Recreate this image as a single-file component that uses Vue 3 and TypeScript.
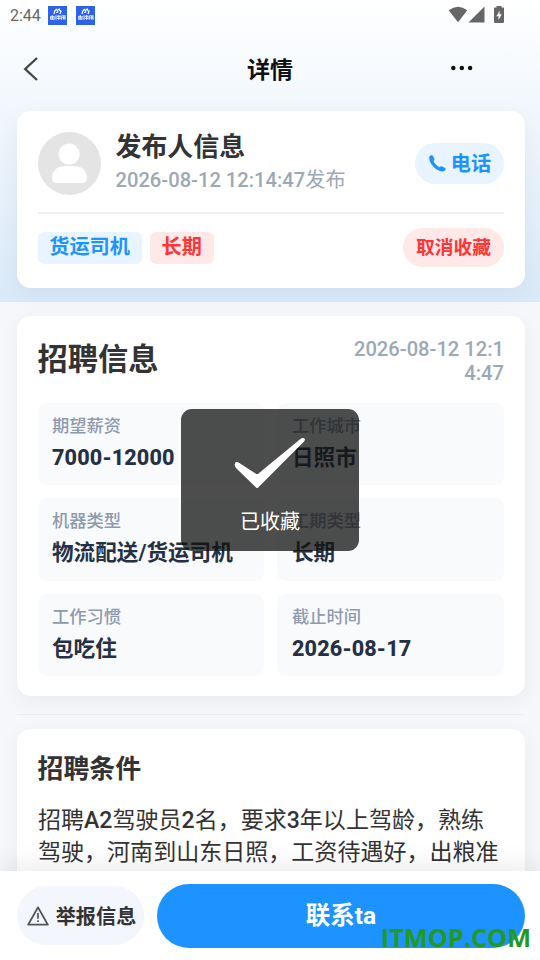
<script setup lang="ts">
interface Field {
  label: string
  value: string
}

interface Run {
  text: string
  latin: boolean
}

const publishedAt = '2026-08-12 12:14:47'

const fields: Field[] = [
  { label: '期望薪资', value: '7000-12000' },
  { label: '工作城市', value: '日照市' },
  { label: '机器类型', value: '物流配送/货运司机' },
  { label: '工期类型', value: '长期' },
  { label: '工作习惯', value: '包吃住' },
  { label: '截止时间', value: '2026-08-17' },
]

const isNumeric = (value: string): boolean => /^[\d-]+$/.test(value)

const requirements =
  '招聘A2驾驶员2名，要求3年以上驾龄，熟练驾驶，河南到山东日照，工资待遇好，出粮准时'

// Latin letters and digits are set one weight heavier than the Chinese text.
const runs: Run[] = (requirements.match(/[A-Za-z0-9]+|[^A-Za-z0-9]+/g) ?? []).map((text) => ({
  text,
  latin: /^[A-Za-z0-9]/.test(text),
}))
</script>

<template>
  <div class="page">
    <div class="hero">
      <div class="status">
        <span class="clock">2:44</span>
        <svg v-for="n in 2" :key="n" class="app-badge" viewBox="0 0 19 19">
          <rect width="19" height="19" fill="#2c63ea" />
          <path d="M6 8 6.800 5 8.300 3.300 9.500 4.500 11.300 3 11.800 4.500 13 5 12 8M8.300 6.800 10.300 5.500" fill="none" stroke="#fff" stroke-width="1.200" />
          <path d="M2 10.800H6.700M4.300 9V13M2.500 13.300H6.500M2.700 11V13.500M6 11V13.500M8 9.300V13.700M9 10.300H12.500M9 12.200H12.500M10.700 9V13.700M13.300 9.500V13.700M14 9.800H17V13.700M14.200 11.800H17M15.500 10V13.500" fill="none" stroke="#fff" stroke-opacity=".9" stroke-width="1.100" />
        </svg>
        <div class="status-icons">
          <svg width="20" height="17" viewBox="0 0 20 17"><path d="M10 16.300.700 4.300Q10-3 19.300 4.300Z" fill="#666" /></svg>
          <svg width="17" height="17" viewBox="0 0 17 17"><path d="M.5 16.500H16.500V.5Z" fill="#666" /></svg>
          <svg class="battery" width="10" height="17" viewBox="0 0 10 17">
            <path d="M0 2.200Q0 1.500.8 1.500H2.500V0H7.500V1.500H9.200Q10 1.500 10 2.200V16Q10 17 9 17H1Q0 17 0 16Z" fill="#666" />
            <path d="M5.800 4.500 2.300 10.200H4.500V14L7.700 8.300H5.500Z" fill="#fff" />
          </svg>
        </div>
      </div>

      <header class="nav">
        <svg width="16" height="26" viewBox="0 0 16 26"><path d="M14 2 2.200 13 14 24" fill="none" stroke="#444" stroke-width="2.300" /></svg>
        <h1>详情</h1>
        <svg class="more" width="24" height="6" viewBox="0 0 24 6">
          <circle cx="3.300" cy="3" r="2.250" /><circle cx="11.800" cy="3" r="2.250" /><circle cx="20.100" cy="3" r="2.250" />
        </svg>
      </header>

      <section class="card publisher">
        <div class="person">
          <svg class="avatar" viewBox="0 0 63 63">
            <circle cx="31.500" cy="31.500" r="31.500" fill="#e4e4e4" />
            <circle cx="31.200" cy="22.200" r="10.600" fill="#fff" />
            <path d="M14 46C14 37.500 21 34 27 34H36C42 34 49 37.500 49 46Q49 51 44 51H19Q14 51 14 46Z" fill="#fff" />
          </svg>
          <div class="who">
            <div class="name">发布人信息</div>
            <div class="posted">{{ publishedAt }}<span class="regular">发布</span></div>
          </div>
          <button class="call">
            <svg width="19" height="19" viewBox="0 0 19 19"><path d="M1.400 2.600C2.300 1.200 4.300.8 5 1.900L6.500 5C6.800 5.900 5.400 6.900 5.700 7.600C6.500 9.500 8.900 12.100 11.100 12.900C12 13.200 12.800 11.900 13.700 12.200L17.100 13.900C18.400 14.700 17.200 16.700 15.600 17.300C9.300 18.800-.2 9 1.400 2.600Z" fill="#1c93ff" /></svg>
            <span>电话</span>
          </button>
        </div>
        <div class="tags">
          <span class="tag blue">货运司机</span>
          <span class="tag red">长期</span>
          <button class="unfav">取消收藏</button>
        </div>
      </section>
    </div>

    <main>
      <section class="card job">
        <div class="job-head">
          <h2>招聘信息</h2>
          <span class="job-time">{{ publishedAt }}</span>
        </div>
        <div class="grid">
          <div v-for="f in fields" :key="f.label" class="cell">
            <div class="label">{{ f.label }}</div>
            <div class="value" :class="{ numeric: isNumeric(f.value) }">{{ f.value }}</div>
          </div>
        </div>
      </section>
      <div class="rule"></div>
      <section class="card terms">
        <h3>招聘条件</h3>
        <p><span v-for="(r, i) in runs" :key="i" :class="{ latin: r.latin }">{{ r.text }}</span></p>
      </section>
    </main>

    <footer>
      <button class="report">
        <svg width="22" height="20" viewBox="0 0 22 20">
          <path d="M11 1.400 20.800 18.600H1.200Z" fill="none" stroke="#555" stroke-width="1.900" stroke-linejoin="round" />
          <path d="M11 7V12.800M11 14.300V16" stroke="#555" stroke-width="1.700" />
        </svg>
        <span>举报信息</span>
      </button>
      <button class="contact">联系ta</button>
    </footer>

    <div class="toast">
      <svg width="72" height="54" viewBox="0 0 72 54"><path d="M4.500 25.500Q1 24 .8 27.500Q.6 29.500 2 31L22 50.500Q23 51.500 24.200 50.500L70 4.500Q71.500 2.500 70.500 1.500Q69 .3 67 1.500L24.500 36.500Q23 37.700 21.500 36.500Z" fill="#fff" /></svg>
      <span>已收藏</span>
    </div>
    <div class="watermark">ITMOP.COM</div>
  </div>
</template>

<style>
body {
  margin: 0;
  background: #f5f7fa;
  overflow: hidden;
}
</style>

<style scoped>
.page {
  position: relative;
  display: flex;
  flex-direction: column;
  width: 540px;
  height: 960px;
  overflow: hidden;
  font-family: Roboto, "Noto Sans CJK SC", sans-serif;
  font-weight: 500;
  color: #333;
  background: #f5f7fa;
}
* { box-sizing: border-box; }
h1, h2, h3, p { margin: 0; }
svg { display: block; flex: none; }
button {
  border: 0;
  padding: 0;
  font: inherit;
  display: flex;
  align-items: center;
  justify-content: center;
}
.regular { font-weight: 400; }
.hero {
  flex: none;
  height: 302px;
  padding: 0 15px 0 17px;
  background: linear-gradient(180deg, #fff 0%, #d9e9f9 100%);
}
.status {
  display: flex;
  align-items: center;
  height: 31px;
  margin: 0 21px 0 -7px;
  color: #666;
  font-size: 16px;
  font-weight: 400;
}
.clock { width: 38px; }
.app-badge { width: 19px; height: 19px; margin-right: 9px; }
.status-icons { display: flex; align-items: center; margin: 0 0 2px auto; height: 17px; }
.battery { margin-left: 9px; }
.nav {
  display: flex;
  align-items: center;
  height: 76px;
  margin-bottom: 4px;
  justify-content: space-between;
  padding: 0 51px 0 6px;
}
h1 { font-size: 23.04px; line-height: 34px; font-weight: 700; color: #111; margin: 3px 0 0 51px; }
.more { fill: #111; margin-bottom: 2px; }
.card {
  border-radius: 14px;
  background: #fff;
  box-shadow: 0 6px 22px rgba(0, 0, 0, .05);
}
.publisher { height: 177px; padding: 21px 21px 0; }
.person {
  display: flex;
  height: 82px;
  border-bottom: 2px solid #ebf0f5;
}
.avatar { width: 63px; height: 63px; }
.who { flex: 1; margin-left: 14.5px; }
.name { font-size: 25.92px; line-height: 30px; font-weight: 700; }
.posted { font-size: 20.16px; line-height: 24px; margin-top: 6px; color: #9ca8b5; }
.call {
  width: 89px;
  height: 41px;
  margin-top: 11px;
  border-radius: 21px;
  gap: 4px;
  background: #e8f4ff;
  color: #1c93ff;
  font-size: 20.16px;
  font-weight: 700;
}
.call svg { margin-top: -1px; }
.call span { padding-bottom: 2px; }
.tags { display: flex; align-items: center; height: 68px; gap: 8px; }
.tag {
  height: 32px;
  padding: 0 11.8px;
  border-radius: 6px;
  font-size: 20.16px;
  line-height: 31px;
  font-weight: 700;
}
.blue { padding-left: 11.3px; background: #e8f4ff; color: #1c93ff; }
.red { background: #ffe8e8; color: #ff3434; }
.unfav {
  width: 101px;
  height: 39px;
  padding-bottom: 4px;
  margin: 0 0 2px auto;
  border-radius: 20px;
  background: #ffe8e8;
  color: #ff3434;
  font-size: 18.72px;
  font-weight: 700;
}
main { padding: 14px 15px 0 17px; }
.job { height: 380px; padding: 21px 21px 0; }
.job-head { display: flex; justify-content: space-between; height: 66px; }
h2 { font-size: 30.24px; line-height: 46px; font-weight: 700; margin-left: -.5px; }
.job-time {
  width: 151px;
  text-align: right;
  font-size: 20.16px;
  line-height: 24px;
  color: #9ca8b5;
  word-break: break-all;
}
.grid {
  display: grid;
  grid-template-columns: 226px 227px;
  grid-auto-rows: 82.3px;
  gap: 13.1px 13px;
}
.cell { padding: 11px 14px 0; border-radius: 9px; background: #f8fafc; }
.cell:nth-child(even) { padding-left: 15px; }
.label { font-size: 17.28px; line-height: 24px; color: #8e9bae; }
.value { font-size: 21.6px; line-height: 32px; margin-top: 4px; font-weight: 700; color: #253044; }
.numeric { font-weight: 800; letter-spacing: .15px; }
.rule { height: 1px; margin: 18px 0 14px; background: #ebedf0; }
.terms { height: 260px; padding: 21px 21px 0; }
h3 { font-size: 25.92px; line-height: 38px; font-weight: 700; margin-left: -.5px; }
p { margin-top: 17px; font-size: 23.04px; line-height: 32.3px; font-weight: 400; word-break: break-all; }
.latin { font-weight: 500; }
footer {
  position: absolute;
  left: 0;
  right: 0;
  bottom: 0;
  height: 89px;
  display: flex;
  align-items: center;
  gap: 13px;
  padding: 0 15px 0 17px;
  background: #fff;
  box-shadow: 0 -6px 22px rgba(0, 0, 0, .08);
}
.report {
  width: 127px;
  height: 59px;
  padding-left: 2px;
  border-radius: 30px;
  gap: 7px;
  background: #f3f6fc;
  color: #333;
  font-size: 20.16px;
  font-weight: 700;
}
.report span { padding-bottom: 1px; }
.contact {
  flex: 1;
  height: 64px;
  padding-bottom: 4px;
  border-radius: 32px;
  background: #1c93ff;
  color: #fff;
  font-size: 24.48px;
  font-weight: 700;
}
.toast {
  position: absolute;
  left: 181px;
  top: 409px;
  width: 178px;
  height: 142px;
  border-radius: 11px;
  background: rgba(17, 17, 17, .75);
  color: #fff;
  display: flex;
  flex-direction: column;
  align-items: center;
  padding-top: 28px;
  font-size: 20px;
  line-height: 28px;
  font-weight: 400;
}
.toast span { margin-top: 17px; }
.watermark {
  position: absolute;
  right: 9px;
  bottom: 6px;
  font-family: "Open Sans", sans-serif;
  font-weight: 700;
  font-size: 25.3px;
  line-height: 34px;
  color: #229a22;
}
</style>
